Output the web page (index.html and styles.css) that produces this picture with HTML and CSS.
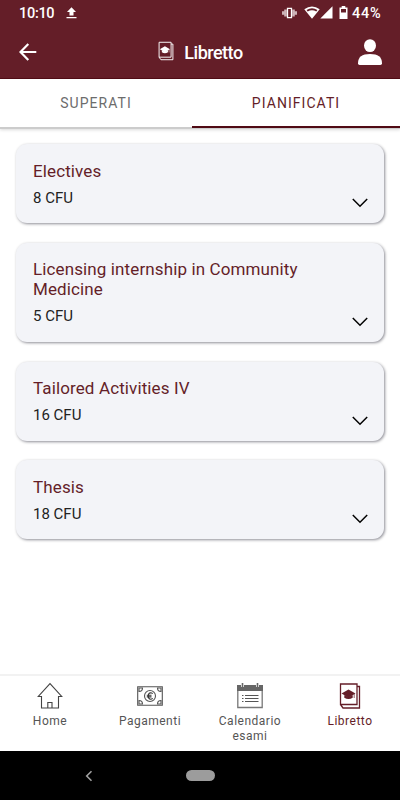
FILE: index.html
```html
<!DOCTYPE html>
<html lang="it">
<head>
    <meta charset="UTF-8">
    <meta name="viewport" content="width=device-width, initial-scale=1.0">
    <title>Libretto</title>
    <link rel="stylesheet" href="styles.css">
</head>
<body>

    <!-- Shared icons -->
    <svg class="icon-defs" width="0" height="0">
        <symbol id="chevron" viewBox="0 0 18 12">
            <path d="M1.8 2 L9 9.3 L16.2 2" fill="none" stroke="currentColor" stroke-width="1.5"/>
        </symbol>
        <symbol id="book" viewBox="0 0 22 27">
            <path d="M1.5 1.5H18V22H1.5Z M18 4H20.5V25.5H4L1.5 22" fill="none" stroke="currentColor" stroke-width="1.3"/>
            <path d="M2.5 11L9.5 7L16.5 11L9.5 15Z M5.3 12.5V15.2Q9.5 17.8 13.7 15.2V12.5L9.5 15Z" fill="currentColor"/>
            <path d="M15.2 11.5V15.5" stroke="currentColor" stroke-width="0.7"/>
        </symbol>
    </svg>

    <header class="header">
        <div class="status-bar">
            <span class="clock">10:10</span>
            <svg class="upload" width="11" height="12" viewBox="0 0 11 12"><path d="M5.5 .3L10 5H7.5V8.5H3.5V5H1Z M.5 10H10.5V11.3H.5Z" fill="#fff"/></svg>
            <div class="status-right">
                <svg width="15" height="12" viewBox="0 0 15 12">
                    <path d="M2.2 2.5H4.8V9.5H2.2Z M10.2 2.5H12.8V9.5H10.2Z M0 4.2H2.2V7.8H0Z M12.8 4.2H15V7.8H12.8Z" fill="#cdb4b8"/>
                    <path d="M5.5 1.3H9.5V10.7H5.5Z" fill="none" stroke="#fff" stroke-width="1.3"/>
                </svg>
                <svg class="wifi" width="16" height="13" viewBox="0 0 16 13">
                    <path d="M.3 3.2Q8-2.4 15.7 3.2L8 12.7Z" fill="#fff"/>
                    <path d="M2.6 4.1Q8 .6 13.4 4.1L12.3 5.4Q8 2.9 3.7 5.4Z" fill="#641e28"/>
                </svg>
                <svg width="13" height="13" viewBox="0 0 13 13"><path d="M12.5 .3V12.5H.3Z" fill="#fff"/></svg>
                <svg class="battery" width="9" height="13" viewBox="0 0 9 13">
                    <path d="M2.7 0H6.3V1.5H8.5V13H.5V1.5H2.7Z" fill="#fff"/>
                    <path d="M2 3H7V6.5H2Z" fill="#641e28"/>
                </svg>
                <span class="level">44%</span>
            </div>
        </div>
        <div class="title-bar">
            <svg class="back" width="18" height="18" viewBox="0 0 18 18"><path d="M17.3 9H2 M9.3 1L1.5 9L9.3 17" fill="none" stroke="#fff" stroke-width="2.2"/></svg>
            <div class="page-title">
                <svg width="16" height="20"><use href="#book"/></svg>
                <h1>Libretto</h1>
            </div>
            <svg class="user" width="24" height="26" viewBox="0 0 24 26">
                <ellipse cx="12" cy="6.6" rx="6" ry="6.4" fill="#fff"/>
                <path d="M0 24.2Q0 15 12 15T24 24.2Q24 26 22.4 26H1.6Q0 26 0 24.2Z" fill="#fff"/>
            </svg>
        </div>
    </header>

    <div class="tabs">
        <div class="tab">SUPERATI</div>
        <div class="tab active">PIANIFICATI</div>
    </div>

    <main class="exams">
        <div class="card">
            <div class="exam">
                <h2>Electives</h2>
                <p>8 CFU</p>
            </div>
            <svg class="chevron" width="18" height="12"><use href="#chevron"/></svg>
        </div>
        <div class="card">
            <div class="exam">
                <h2>Licensing internship in Community Medicine</h2>
                <p>5 CFU</p>
            </div>
            <svg class="chevron" width="18" height="12"><use href="#chevron"/></svg>
        </div>
        <div class="card">
            <div class="exam">
                <h2>Tailored Activities IV</h2>
                <p>16 CFU</p>
            </div>
            <svg class="chevron" width="18" height="12"><use href="#chevron"/></svg>
        </div>
        <div class="card">
            <div class="exam">
                <h2>Thesis</h2>
                <p>18 CFU</p>
            </div>
            <svg class="chevron" width="18" height="12"><use href="#chevron"/></svg>
        </div>
    </main>

    <nav class="bottom-nav">
        <div class="nav-item">
            <svg width="26" height="28" viewBox="0 0 26 28" fill="none" stroke="#444" stroke-width="1.1">
                <path d="M4.5 14.5H1.3L13 1.6L24.7 14.5H21.5V26H4.5Z M10.8 26V20.5H15V26"/>
            </svg>
            <span>Home</span>
        </div>
        <div class="nav-item">
            <svg width="26" height="28" viewBox="0 0 26 28" fill="none" stroke="#555" stroke-width="1.1">
                <path d="M.7 4.7H25.3V23.3H.7Z"/>
                <path d="M2 9.5Q5.5 9.5 5.5 6H2Z M24 9.5Q20.5 9.5 20.5 6H24Z M2 18.5Q5.5 18.5 5.5 22H2Z M24 18.5Q20.5 18.5 20.5 22H24Z"/>
                <circle cx="13" cy="14" r="5.5"/>
                <path d="M15.7 11.6Q14.8 10.8 13.6 10.8Q11.3 10.9 11.3 14T13.6 17.2Q14.8 17.2 15.7 16.4 M9.8 13.2H14.5 M9.8 14.9H14.5" stroke="#333"/>
            </svg>
            <span>Pagamenti</span>
        </div>
        <div class="nav-item">
            <svg width="26" height="28" viewBox="0 0 26 28" fill="none">
                <path d="M.8 4V25.5H25.2V4" stroke="#777" stroke-width="1.3"/>
                <path d="M0 3H26V9H0Z" fill="#666"/>
                <path d="M5.5 1V5 M20.5 1V5" stroke="#fff" stroke-width="3"/>
                <path d="M5.5 1V5 M20.5 1V5" stroke="#666" stroke-width="1.6"/>
                <path d="M5 13.5H6.5 M5 16.5H6.5 M5 19.5H6.5 M8 13.5H21.5 M8 16.5H21.5 M8 19.5H21.5" stroke="#555"/>
            </svg>
            <span>Calendario esami</span>
        </div>
        <div class="nav-item active">
            <svg width="22" height="28"><use href="#book"/></svg>
            <span>Libretto</span>
        </div>
    </nav>

    <div class="system-nav">
        <svg width="8" height="12" viewBox="0 0 8 12"><path d="M6.5 1.2L1.7 6L6.5 10.8" fill="none" stroke="#a0a0a0" stroke-width="1.6"/></svg>
        <div class="home-pill"></div>
    </div>

</body>
</html>
```
FILE: styles.css
```css
* {
    box-sizing: border-box;
}

body {
    margin: 0;
    height: 800px;
    display: flex;
    flex-direction: column;
    font-family: Roboto, Arial, sans-serif;
    background-color: #fff;
    overflow: hidden;
}

h1, h2, p {
    margin: 0;
}

svg {
    display: block;
    flex: none;
}

.icon-defs {
    display: none;
}

.header {
    height: 79px;
    background-color: #641e28;
    border-bottom: 1px solid #520d16;
    color: white;
}

.status-bar {
    display: flex;
    align-items: center;
    height: 26px;
    padding: 0 17px 0 19px;
    font-size: 14.5px;
    font-weight: 500;
}

.clock {
    width: 35px;
    white-space: nowrap;
    letter-spacing: -0.3px;
}

.upload {
    margin: -1px 0 0 12px;
}

.status-right {
    display: flex;
    align-items: center;
    margin-left: auto;
}

.status-right svg {
    margin-top: -1px;
}

.status-right .wifi {
    margin-left: 7px;
}

.status-right .battery {
    margin: -1px 4px 0 6px;
}

.level {
    width: 31px;
    white-space: nowrap;
    letter-spacing: 0.7px;
}

.title-bar {
    display: flex;
    align-items: center;
    justify-content: space-between;
    height: 52px;
    padding: 0 18px 0 19px;
}

.page-title {
    display: flex;
    align-items: center;
    gap: 10px;
    padding-left: 6px;
}

.page-title h1 {
    font-size: 18px;
    font-weight: 500;
    letter-spacing: -0.5px;
}

.page-title svg {
    margin-top: -2px;
}

.tabs {
    display: flex;
    height: 50px;
    border-bottom: 2px solid #ccc;
    box-shadow: 0 1px 3px rgba(0, 0, 0, 0.15);
}

.tab {
    width: 192px;
    height: 49px;
    line-height: 49px;
    text-align: center;
    font-size: 14px;
    font-weight: 400;
    letter-spacing: 1.05px;
    color: #6c6c6c;
}

.tab.active {
    width: 208px;
    color: #641e28;
    border-bottom: 2px solid #500a14;
}

.exams {
    flex: 1;
    display: flex;
    flex-direction: column;
    gap: 19.9px;
    padding: 15.4px 16px 0;
}

.card {
    display: flex;
    justify-content: space-between;
    align-items: flex-end;
    padding: 16.4px 15px 14px 17px;
    border-radius: 11px;
    background-color: #f3f4f8;
    box-shadow: 1px 1px 3px rgba(0, 0, 20, 0.45);
}

.exam {
    width: 290px;
}

.card h2 {
    font-size: 17px;
    line-height: 20px;
    font-weight: 400;
    letter-spacing: 0.12px;
    color: #641e28;
}

.card p {
    margin-top: 6.8px;
    font-size: 15px;
    line-height: 20px;
    padding-bottom: 1.6px;
    font-weight: 400;
    color: #222;
}

.bottom-nav {
    display: flex;
    height: 77px;
    border-top: 2px solid #f2f2f2;
    padding-top: 6px;
}

.nav-item {
    flex: 1;
    display: flex;
    flex-direction: column;
    align-items: center;
    padding: 0 12px;
    font-size: 12px;
    line-height: 14.5px;
    font-weight: 400;
    letter-spacing: 0.5px;
    text-align: center;
    color: #555;
}

.nav-item span {
    margin-top: 4px;
}

.nav-item.active {
    color: #641e28;
}

.system-nav {
    display: flex;
    align-items: center;
    height: 49px;
    padding-left: 85px;
    background-color: #000;
}

.home-pill {
    width: 29px;
    height: 11px;
    margin-left: 93px;
    border-radius: 6px;
    background-color: #9c9c9c;
}
```
